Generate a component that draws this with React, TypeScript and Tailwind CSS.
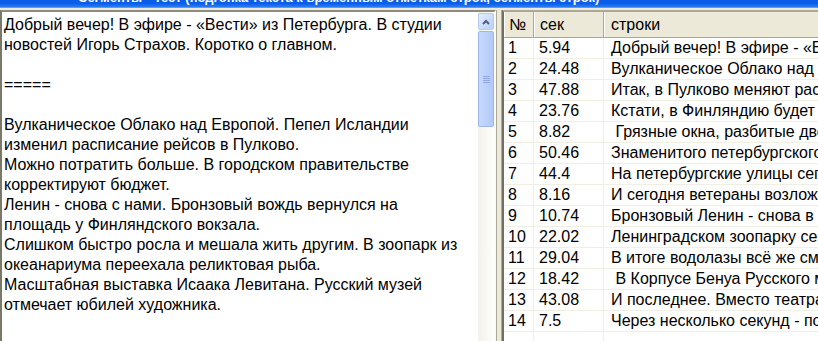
import React from "react";

const memoLines = [
  "Добрый вечер! В эфире - «Вести» из Петербурга. В студии",
  "новостей Игорь Страхов. Коротко о главном.",
  "",
  "=====",
  "",
  "Вулканическое Облако над Европой. Пепел Исландии",
  "изменил расписание рейсов в Пулково.",
  "Можно потратить больше. В городском правительстве",
  "корректируют бюджет.",
  "Ленин - снова с нами. Бронзовый вождь вернулся на",
  "площадь у Финляндского вокзала.",
  "Слишком быстро росла и мешала жить другим. В зоопарк из",
  "океанариума переехала реликтовая рыба.",
  "Масштабная выставка Исаака Левитана. Русский музей",
  "отмечает юбилей художника.",
];

const rows: [string, string, string][] = [
  ["1", "5.94", "Добрый вечер! В эфире - «Вести» из Петербурга"],
  ["2", "24.48", "Вулканическое Облако над Европой"],
  ["3", "47.88", "Итак, в Пулково меняют расписание"],
  ["4", "23.76", "Кстати, в Финляндию будет проще"],
  ["5", "8.82", " Грязные окна, разбитые двери"],
  ["6", "50.46", "Знаменитого петербургского"],
  ["7", "44.4", "На петербургские улицы сегодня"],
  ["8", "8.16", "И сегодня ветераны возложили"],
  ["9", "10.74", "Бронзовый Ленин - снова в строю"],
  ["10", "22.02", "Ленинградском зоопарку сегодня"],
  ["11", "29.04", "В итоге водолазы всё же смогли"],
  ["12", "18.42", " В Корпусе Бенуа Русского музея"],
  ["13", "43.08", "И последнее. Вместо театра"],
  ["14", "7.5", "Через несколько секунд - погода"],
];

const font = { fontFamily: '"Liberation Sans", Arial, sans-serif' };

export default function App() {
  return (
    <div
      className="w-[818px] h-[341px] overflow-hidden bg-[#ECE9D8] flex flex-col text-black"
      style={font}
    >
      {/* title bar remnant */}
      <div className="h-[8px] overflow-hidden bg-gradient-to-b from-[#0A5CE6] via-[#0A5FEA] to-[#2A7BF5] border-b border-[#5A9BF8]">
        <div className="-mt-[10px] pl-[78px] text-white font-bold text-[13px] leading-[16px] whitespace-nowrap">
          Сегменты - Тест (подгонка текста к временным отметкам строк, сегменты строк)
        </div>
      </div>
      <div className="h-[2px] bg-[#ECE9D8]" />
      <div className="flex flex-1 min-h-0">
        {/* memo */}
        <div className="w-[496px] flex border-l-2 border-t-2 border-l-[#7A7868] border-t-[#8E8C7E] border-r-2 border-r-[#FBFBF8]">
          <div className="flex-1 bg-white pl-[2px] pt-[3px] overflow-hidden">
            {memoLines.map((l, i) => (
              <div key={i} className="h-[20px] leading-[20px] text-[16px] whitespace-pre">
                {l || " "}
              </div>
            ))}
          </div>
          {/* scrollbar */}
          <div className="w-[16px] flex flex-col bg-gradient-to-r from-[#F3F1EA] to-[#FEFEFC]">
            <div className="h-[17px] mt-[1px] rounded-[2px] border border-[#B7CAF5] bg-gradient-to-br from-[#E4EDFD] to-[#B8CFF8] flex items-center justify-center">
              <svg width="8" height="6" viewBox="0 0 8 6">
                <path d="M1 5 L4 2 L7 5" stroke="#4D6185" strokeWidth="2" fill="none" />
              </svg>
            </div>
            <div className="h-[96px] mt-[1px] rounded-[2px] border border-[#9DB5EC] bg-gradient-to-r from-[#C8D9FB] via-[#BCD1FA] to-[#B2C9F7] flex items-center justify-center">
              <div className="flex flex-col gap-[1px]">
                <div className="w-[7px] h-[1px] bg-[#8EA9E4]" />
                <div className="w-[7px] h-[1px] bg-[#8EA9E4]" />
                <div className="w-[7px] h-[1px] bg-[#8EA9E4]" />
                <div className="w-[7px] h-[1px] bg-[#8EA9E4]" />
              </div>
            </div>
            <div className="flex-1" />
          </div>
        </div>
        {/* splitter */}
        <div className="w-[6px] flex">
          <div className="w-[1px] bg-[#ACA899]" />
          <div className="flex-1 bg-[#ECE9D8]" />
          <div className="w-[1px] bg-[#ACA899]" />
        </div>
        {/* grid */}
        <div className="flex-1 bg-white border-l-2 border-t-2 border-l-[#716F64] border-t-[#ACA899] overflow-hidden text-[16px]">
          <div className="flex h-[26px] bg-[#ECE9D8] border-b border-[#ACA899]">
            <div className="w-[30px] border-r border-[#ACA899] border-l border-l-white pl-[4px] leading-[25px]">№</div>
            <div className="w-[70px] border-r border-[#ACA899] border-l border-l-white pl-[5px] leading-[25px]">сек</div>
            <div className="flex-1 border-l border-l-white pl-[6px] leading-[25px]">строки</div>
          </div>
          {rows.map(([n, s, t]) => (
            <div key={n} className="flex h-[21px] border-b border-[#F1EFE2]">
              <div className="w-[30px] border-r border-[#F1EFE2] pl-[4px] leading-[20px] whitespace-nowrap">{n}</div>
              <div className="w-[70px] border-r border-[#F1EFE2] pl-[5px] leading-[20px] whitespace-nowrap">{s}</div>
              <div className="flex-1 pl-[7px] leading-[20px] whitespace-pre overflow-hidden">{t}</div>
            </div>
          ))}
          <div className="flex h-[40px]">
            <div className="w-[30px] border-r border-[#F1EFE2]" />
            <div className="w-[70px] border-r border-[#F1EFE2]" />
            <div className="flex-1" />
          </div>
        </div>
      </div>
    </div>
  );
}
